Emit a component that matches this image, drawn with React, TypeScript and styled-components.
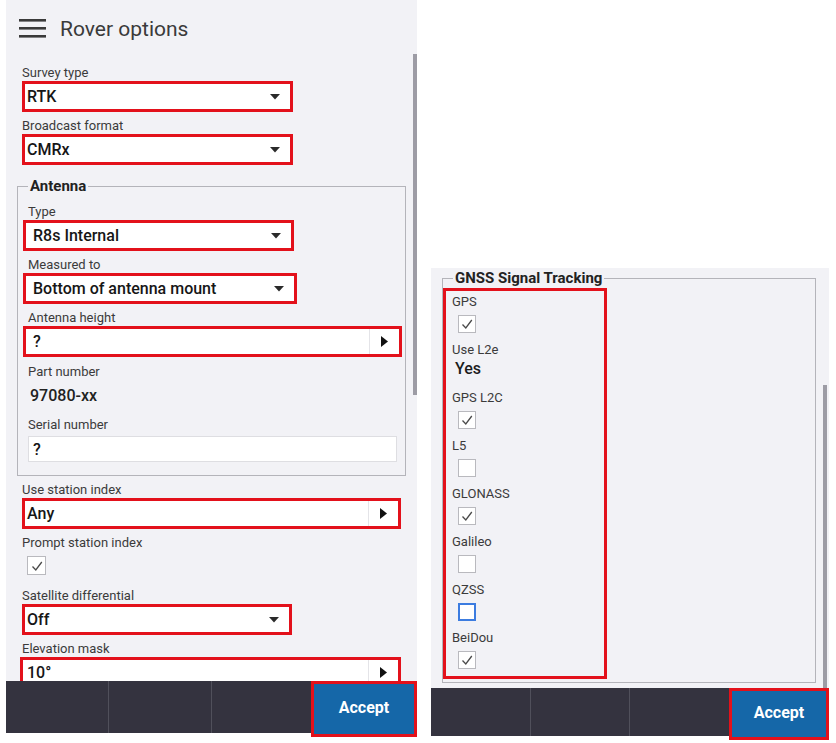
import React from 'react';
import styled, { createGlobalStyle } from 'styled-components';

const RED = '#e3111b';
const PANEL = '#f2f2f6';
const BAR = '#34333f';

const GlobalStyle = createGlobalStyle`
  html, body {
    margin: 0;
    padding: 0;
    background: #fff;
  }
  body {
    font-family: Roboto, "Liberation Sans", Arial, sans-serif;
    color: #333;
  }
`;

type Check = 'on' | 'off' | 'focus';

const signals: { label: string, check?: Check, value?: string }[] = [
  { label: 'GPS', check: 'on' },
  { label: 'Use L2e', value: 'Yes' },
  { label: 'GPS L2C', check: 'on' },
  { label: 'L5', check: 'off' },
  { label: 'GLONASS', check: 'on' },
  { label: 'Galileo', check: 'off' },
  { label: 'QZSS', check: 'focus' },
  { label: 'BeiDou', check: 'on' },
];

const Caret = () => (
  <CaretIcon width="10" height="6" viewBox="0 0 10 6">
    <path d="M0 0 L10 0 L5 5.5 Z" fill="#2a2a2a" />
  </CaretIcon>
);

const Picker = () => (
  <PickerCell>
    <svg width="7" height="11" viewBox="0 0 7 11">
      <path d="M0 0 L7 5.5 L0 11 Z" fill="#111" />
    </svg>
  </PickerCell>
);

const CheckBox = ({ state, $size = 18 }: { state: Check, $size?: number }) => (
  <Box $state={state} $size={$size}>
    {state === 'on' && (
      <svg width="14" height="14" viewBox="0 0 14 14">
        <polyline points="2.5,7.5 5.8,11 11.8,3" fill="none" stroke="#4a4a4a" strokeWidth="1.3" />
      </svg>
    )}
  </Box>
);

// the red frame reaches further left than the field inside a group,
// so the text is pushed back by the same amount
const Select = ({ value, width, shift = 0 }: { value: string, width: number, shift?: number }) => (
  <Field $w={width} $shift={shift}>
    <Value $pad={2 - shift}>{value}</Value>
    <Caret />
  </Field>
);

const Entry = ({ value, width, shift = 0 }: { value: string, width: number, shift?: number }) => (
  <Field $w={width} $shift={shift}>
    <Value $pad={2 - shift}>{value}</Value>
    <Picker />
  </Field>
);

const ButtonBar = ({ $h, $cols }: { $h: number, $cols: string }) => (
  <Bar $h={$h} $cols={$cols}>
    <Cell />
    <Cell />
    <Cell />
    <Accept>Accept</Accept>
  </Bar>
);

export default function App() {
  return (
    <Page>
      <GlobalStyle />

      <Screen $w={411} $h={733}>
        <Scroll>
          <Header>
            <svg width="27" height="19" viewBox="0 0 27 19">
              <rect x="0" y="0" width="27" height="2.6" fill="#3a3a3a" />
              <rect x="0" y="8" width="27" height="2.6" fill="#3a3a3a" />
              <rect x="0" y="16" width="27" height="2.6" fill="#3a3a3a" />
            </svg>
            <Title>Rover options</Title>
          </Header>

          <Form>
            <Label>Survey type</Label>
            <Select value="RTK" width={271} />
            <Label>Broadcast format</Label>
            <Select value="CMRx" width={271} />

            <Group>
              <Legend>Antenna</Legend>
              <Label>Type</Label>
              <Select value="R8s Internal" width={271} shift={-5} />
              <Label>Measured to</Label>
              <Select value="Bottom of antenna mount" width={274} shift={-5} />
              <Label>Antenna height</Label>
              <Entry value="?" width={379} shift={-5} />
              <Label $top={1}>Part number</Label>
              <ReadOnly>97080-xx</ReadOnly>
              <Label>Serial number</Label>
              <TextBox>?</TextBox>
            </Group>

            <Label $top={6}>Use station index</Label>
            <Entry value="Any" width={379} />
            <Label>Prompt station index</Label>
            <CheckRow $left={5} $bottom={13}>
              <CheckBox state="on" $size={19} />
            </CheckRow>
            <Label>Satellite differential</Label>
            <Select value="Off" width={270} />
            <Label>Elevation mask</Label>
            <Entry value="10°" width={381} shift={-2} />
          </Form>

          <ScrollThumb $top={54} $height={341} $right={0} />
        </Scroll>
        <ButtonBar $h={52} $cols="102px 103px 100px 1fr" />
      </Screen>

      <Screen $w={398} $h={468} $top={268}>
        <Scroll>
          <SignalGroup>
            <SignalLegend>GNSS Signal Tracking</SignalLegend>
            <Marked>
              {signals.map(s => (
                <Signal key={s.label}>
                  <Label>{s.label}</Label>
                  {s.value
                    ? <Yes>{s.value}</Yes>
                    : <CheckRow $left={6} $bottom={0}><CheckBox state={s.check ?? 'off'} /></CheckRow>}
                </Signal>
              ))}
            </Marked>
          </SignalGroup>
          <ScrollThumb $top={117} $height={303} $right={2} />
        </Scroll>
        <ButtonBar $h={48} $cols="99px 99px 100px 1fr" />
      </Screen>
    </Page>
  );
}


const Page = styled.div`
  display: flex;
  align-items: flex-start;
  gap: 14px;
  padding-left: 6px;
  width: 836px;
  height: 743px;
  box-sizing: border-box;
  overflow: hidden;
`;

const Screen = styled.div<{ $w: number, $h: number, $top?: number }>`
  width: ${p => p.$w}px;
  height: ${p => p.$h}px;
  margin-top: ${p => p.$top ?? 0}px;
  background: ${PANEL};
  display: flex;
  flex-direction: column;
  flex: 0 0 auto;
`;

const Scroll = styled.div`
  flex: 1;
  position: relative;
  overflow: hidden;
`;

const ScrollThumb = styled.div<{ $top: number, $height: number, $right: number }>`
  position: absolute;
  top: ${p => p.$top}px;
  right: ${p => p.$right}px;
  width: 4px;
  height: ${p => p.$height}px;
  background: #9d9ca5;
`;

const Header = styled.div`
  height: 55px;
  display: flex;
  align-items: center;
  padding-left: 13px;
  padding-top: 2px;
  box-sizing: border-box;
`;

const Title = styled.h1`
  margin: 0 0 0 14px;
  font-size: 21px;
  font-weight: 400;
  color: #3a3a3a;
`;

const Form = styled.div`
  display: flex;
  flex-direction: column;
  align-items: flex-start;
  padding: 10px 0 0 16px;
`;

const Label = styled.div<{ $top?: number }>`
  margin-top: ${p => p.$top ?? 0}px;
  font-size: 13px;
  line-height: 16px;
  color: #3b3b3b;
  white-space: nowrap;
`;

const Field = styled.div<{ $w: number, $shift: number }>`
  width: ${p => p.$w}px;
  height: 31px;
  margin: 0 0 6px ${p => p.$shift}px;
  box-sizing: border-box;
  border: 3px solid ${RED};
  background: #fff;
  display: flex;
  align-items: center;
  flex: 0 0 auto;
`;

const Value = styled.span<{ $pad: number }>`
  flex: 1;
  padding-left: ${p => p.$pad}px;
  font-size: 16px;
  font-weight: 500;
  color: #161616;
  white-space: nowrap;
`;

const CaretIcon = styled.svg`
  margin-right: 10px;
`;

const PickerCell = styled.div`
  width: 29px;
  align-self: stretch;
  border-left: 1px solid #e4e4e8;
  display: flex;
  align-items: center;
  justify-content: center;
`;

const Group = styled.fieldset`
  width: 389px;
  min-width: 0;
  margin: 6px 0 0 -5px;
  padding: 9px 0 13px 10px;
  box-sizing: border-box;
  border: 1px solid #b4b4ba;
  display: flex;
  flex-direction: column;
  align-items: flex-start;
`;

const Legend = styled.legend`
  padding: 0 2px;
  font-size: 15px;
  line-height: 18px;
  font-weight: 700;
  color: #222;
`;

const ReadOnly = styled.div`
  margin: 4px 0 9px 2px;
  font-size: 16px;
  line-height: 24px;
  font-weight: 500;
  color: #222;
`;

const TextBox = styled.div`
  width: 369px;
  height: 26px;
  margin-top: 3px;
  box-sizing: border-box;
  border: 1px solid #dedee2;
  background: #fff;
  padding-left: 4px;
  display: flex;
  align-items: center;
  font-size: 16px;
  font-weight: 500;
  color: #161616;
`;

const CheckRow = styled.div<{ $left: number, $bottom: number }>`
  margin: 5px 0 ${p => p.$bottom}px ${p => p.$left}px;
  display: flex;
`;

const Box = styled.div<{ $state: Check, $size: number }>`
  width: ${p => p.$size}px;
  height: ${p => p.$size}px;
  box-sizing: border-box;
  background: #fff;
  border: ${p => (p.$state === 'focus' ? '2px solid #3c7ce0' : '1px solid #b9b9be')};
  display: flex;
  align-items: center;
  justify-content: center;
`;

const SignalGroup = styled.fieldset`
  width: 374px;
  height: 414px;
  margin: 1px 0 0 11px;
  padding: 1px 0 0 0;
  box-sizing: border-box;
  border: 1px solid #b4b4ba;
`;

const SignalLegend = styled(Legend)`
  margin-left: 10px;
`;

const Marked = styled.div`
  width: 164px;
  box-sizing: border-box;
  border: 3px solid ${RED};
  padding: 3px 0 7px 6px;
`;

const Signal = styled.div`
  margin-bottom: 9px;

  &:last-child {
    margin-bottom: 0;
  }
`;

const Yes = styled.div`
  margin: 1px 0 0 3px;
  padding-bottom: 3px;
  font-size: 16px;
  line-height: 19px;
  font-weight: 500;
  color: #1c1c1c;
`;

const Bar = styled.div<{ $h: number, $cols: string }>`
  height: ${p => p.$h}px;
  background: ${BAR};
  display: grid;
  grid-template-columns: ${p => p.$cols};
  flex: 0 0 auto;
`;

const Cell = styled.div`
  border-left: 1px solid #50505b;

  &:first-child {
    border-left: none;
  }
`;

const Accept = styled.div`
  height: calc(100% + 4px);
  box-sizing: border-box;
  border: 3px solid ${RED};
  background: #1567a8;
  color: #fff;
  font-size: 16px;
  font-weight: 700;
  display: flex;
  align-items: center;
  justify-content: center;
  padding-bottom: 4px;
`;
